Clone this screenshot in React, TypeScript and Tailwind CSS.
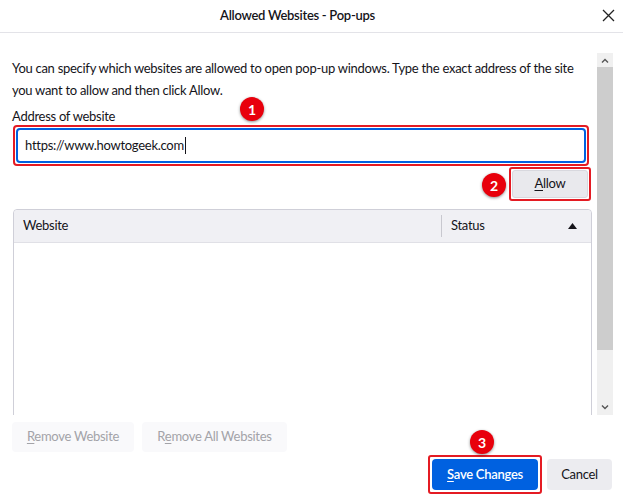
import React from "react";

function Badge({ n, className }: { n: string; className: string }) {
  return (
    <div
      className={`absolute w-[24px] h-[24px] rounded-full bg-[#e8000c] text-white text-[14px] font-bold tracking-normal flex items-center justify-center shadow-[0_1px_3px_rgba(0,0,0,0.45)] ${className}`}
    >
      {n}
    </div>
  );
}

export default function App() {
  return (
    <div
      className="relative w-[623px] h-[500px] bg-white overflow-hidden text-[#15141a] text-[13px] tracking-[-0.28px]"
      style={{ fontFamily: "Lato, 'Noto Sans', sans-serif" }}
    >
      {/* Title bar */}
      <div className="relative h-[33px] border-b border-[#e3e3e8] flex items-center justify-center pr-[28px]">
        <span className="text-[13px] font-semibold text-[#15141a]">Allowed Websites - Pop-ups</span>
        <svg
          className="absolute right-[8px] top-[9px]"
          width="13"
          height="13"
          viewBox="0 0 13 13"
          fill="none"
          stroke="#222"
          strokeWidth="1.3"
        >
          <path d="M1 1L12 12M12 1L1 12" />
        </svg>
      </div>

      {/* Scrollable region */}
      <div className="flex h-[382px]">
        <div className="w-[592px] h-[382px] overflow-hidden pl-[12px] pt-[24px]">
          <div className="leading-[22px] whitespace-nowrap">
            You can specify which websites are allowed to open pop-up windows. Type the exact address of the site
            <br />
            you want to allow and then click Allow.
          </div>
          <div className="mt-[6px] h-[18px] leading-[18px]">Address of website</div>
          <div className="ml-[1px] w-[576px] h-[41px] border-2 border-[#e41b23] rounded-[4px] p-[1px]">
            <div className="h-full border-2 border-[#0061e0] rounded-[4px] flex items-center pl-[7px]">
              <span>https://www.howtogeek.com</span>
              <span className="inline-block w-[1px] h-[17px] bg-[#15141a] ml-[1px]" />
            </div>
          </div>
          <div className="flex justify-end items-center mt-[1px] pr-[1px] h-[34px]">
            <div className="w-[82px] h-[34px] border-2 border-[#e41b23] rounded-[3px] p-[1px]">
              <div className="h-full rounded-[3px] bg-[#e9e9ed] border border-[#d8d8de] flex items-center justify-center">
                <span>
                  <span className="underline underline-offset-2">A</span>llow
                </span>
              </div>
            </div>
          </div>
          <div className="mt-[8px] ml-[1px] border border-[#cfcfd8] rounded-t-[4px] h-[220px]">
            <div className="h-[33px] bg-[#f0f0f4] border-b border-[#e0e0e6] flex items-center rounded-t-[4px]">
              <div className="w-[427px] pl-[9px]">Website</div>
              <div className="w-[1px] h-[22px] bg-[#c8c8cf]" />
              <div className="flex-1 pl-[9px] flex items-center justify-between pr-[14px]">
                <span>Status</span>
                <svg width="9" height="6" viewBox="0 0 9 6">
                  <path d="M0 6L4.5 0L9 6Z" fill="#15141a" />
                </svg>
              </div>
            </div>
          </div>
        </div>
        {/* Scrollbar */}
        <div className="ml-[5px] mt-[20px] w-[16px] h-[362px] flex flex-col bg-[#f0f0f0]">
          <div className="h-[14px] flex items-center justify-center">
            <svg width="8" height="5" viewBox="0 0 8 5" fill="none" stroke="#555" strokeWidth="1.4">
              <path d="M1 4.5L4 1.5L7 4.5" />
            </svg>
          </div>
          <div className="h-[283px] bg-[#cdcdcd]" />
          <div className="flex-1 flex items-end justify-center pb-[5px]">
            <svg width="8" height="5" viewBox="0 0 8 5" fill="none" stroke="#555" strokeWidth="1.4">
              <path d="M1 0.5L4 3.5L7 0.5" />
            </svg>
          </div>
        </div>
      </div>

      {/* Remove buttons */}
      <div className="flex gap-[8px] pl-[12px] mt-[7px]">
        <div className="h-[30px] w-[122px] rounded-[4px] bg-[#f9f9fb] text-[#a3a3a8] flex items-center justify-center">
          <span>
            <span className="underline underline-offset-2">R</span>emove Website
          </span>
        </div>
        <div className="h-[30px] w-[145px] rounded-[4px] bg-[#f9f9fb] text-[#a3a3a8] flex items-center justify-center">
          <span>
            R<span className="underline underline-offset-2">e</span>move All Websites
          </span>
        </div>
      </div>

      {/* Footer */}
      <div className="flex justify-end items-center gap-[5px] pr-[11px] mt-[3px]">
        <div className="w-[114px] h-[39px] border-2 border-[#e41b23] rounded-[3px] p-[2px]">
          <div className="h-full rounded-[4px] bg-[#0061e0] text-white font-semibold flex items-center justify-center">
            <span>
              <span className="underline underline-offset-2">S</span>ave Changes
            </span>
          </div>
        </div>
        <div className="w-[65px] h-[31px] rounded-[4px] bg-[#ececf0] flex items-center justify-center">
          Cancel
        </div>
      </div>

      <Badge n="1" className="left-[240px] top-[97px]" />
      <Badge n="2" className="left-[482px] top-[173px]" />
      <Badge n="3" className="left-[470px] top-[430px]" />
    </div>
  );
}
